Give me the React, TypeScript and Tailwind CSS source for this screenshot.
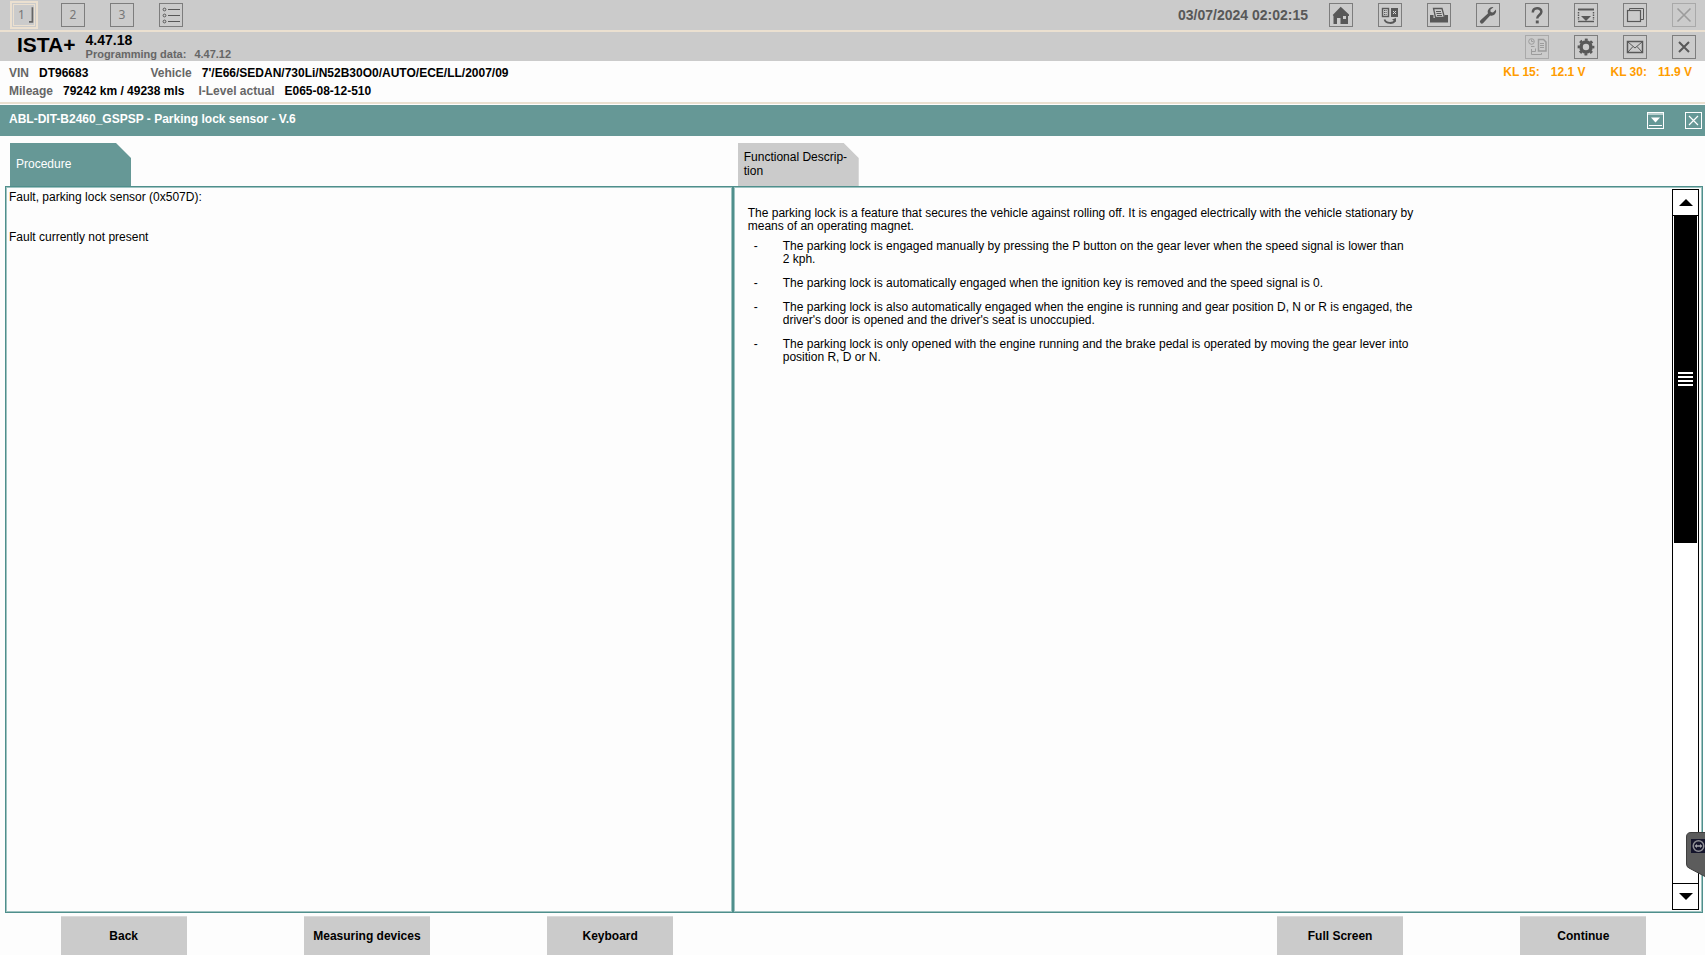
import type { ReactNode } from 'react';

type IconButtonProps = { label: string; children: ReactNode; faded?: boolean };

function IconButton({ label, children, faded = false }: IconButtonProps) {
  return (
    <button
      type="button"
      aria-label={label}
      className={
        faded
          ? 'size-6 shrink-0 border border-[#a9a9a9] bg-[#cbcbcb] text-[#9c9c9c]'
          : 'size-6 shrink-0 border border-[#7d7d7d] bg-[#cbcbcb] text-[#585858]'
      }
    >
      {children}
    </button>
  );
}

function Glyph({ children }: { children: ReactNode }) {
  return (
    <svg viewBox="1 1 22 22" className="block size-full" fill="none" stroke="currentColor" aria-hidden="true">
      {children}
    </svg>
  );
}

function HomeIcon() {
  return (
    <Glyph>
      <path
        fill="currentColor"
        stroke="none"
        fillRule="evenodd"
        d="M11.700 3.700 L20 11.500 V13 H19 V21 H11.500 V15 H8 V21 H4.500 V13 L3.700 12 Z M14 13 V16 H17 V13 Z"
      />
    </Glyph>
  );
}

function TransferIcon() {
  return (
    <Glyph>
      <rect x="4.500" y="5.500" width="6" height="8" strokeWidth="1.400" />
      <path d="M6 7.500h3M6 9.500h3M6 11.500h3" strokeWidth="1" strokeDasharray="1 .6" />
      <rect x="13" y="5" width="7" height="9" fill="currentColor" stroke="none" />
      <path d="M15 8l3 3M18 8l-3 3" stroke="#d8d8d8" />
      <path d="M6.500 16.500c1.500 4.500 9 4.500 10.500 .8" strokeWidth="1.800" />
      <path d="M14 16.500l4-1.500v4z" fill="currentColor" stroke="none" />
    </Glyph>
  );
}

function PrinterIcon() {
  return (
    <Glyph>
      <path d="M3 12h3.500v3h11v-3H21v7.500H3z" fill="currentColor" stroke="none" />
      <path d="M8.500 14.500L6.500 5.500H15l2.500 9z" strokeWidth="1.300" />
      <path d="M9 8.500h5M9.500 10.500h5M10 12.500h5" strokeWidth="1.200" />
    </Glyph>
  );
}

function WrenchIcon() {
  return (
    <Glyph>
      <path
        d="M17.500 4.200a4.800 4.800 0 0 0-5.600 6.300L4.500 17.300a1.900 1.900 0 0 0 2.700 2.700l7-7.500a4.800 4.800 0 0 0 5.800-6l-3 3-2.300-.5-.4-2.200z"
        fill="currentColor"
        stroke="none"
      />
    </Glyph>
  );
}

function HelpIcon() {
  return (
    <Glyph>
      <path d="M7.800 9.500c0-5.400 8.600-5.400 8.600-.8 0 3.200-4.200 3.300-4.200 6.800" strokeWidth="2.500" />
      <rect x="10.800" y="17.500" width="2.900" height="2.900" fill="currentColor" stroke="none" />
    </Glyph>
  );
}

function DropPanelIcon() {
  return (
    <Glyph>
      <path d="M4 6.500h16" strokeWidth="2" />
      <path d="M4.500 9v8M19.500 9v8" strokeWidth="1.400" strokeDasharray="1.500 1" />
      <path d="M7 13h10l-5 5z" fill="currentColor" stroke="none" />
      <path d="M4 18.500h16" strokeWidth="1.400" />
    </Glyph>
  );
}

function WindowsIcon() {
  return (
    <Glyph>
      <path d="M6.500 8V5.500h14v11H18" />
      <rect x="4.500" y="7.500" width="13" height="11" strokeWidth="1.200" />
    </Glyph>
  );
}

function BigCrossIcon() {
  return (
    <Glyph>
      <path d="M5.500 5.500l13 13M18.500 5.500l-13 13" strokeWidth="1.600" />
    </Glyph>
  );
}

function CrossIcon() {
  return (
    <Glyph>
      <path d="M7 7l10 10M17 7L7 17" strokeWidth="2" />
    </Glyph>
  );
}

function DocumentFlowIcon() {
  return (
    <Glyph>
      <circle cx="6.500" cy="6.500" r="2.800" />
      <path d="M6.500 4.500v2h2" />
      <path d="M13.500 4.500h5l2.500 2.500v9h-7.500z" strokeWidth="1.500" />
      <path d="M15 8.500h4M15 10.500h4M15 12.500h4" />
      <path d="M6 11.500h3.500M6.500 14v5.500h10V18M10.500 13.500v3h-4" />
    </Glyph>
  );
}

function GearIcon() {
  return (
    <Glyph>
      <circle cx="12" cy="12" r="5" strokeWidth="3.600" />
      <circle cx="12" cy="12" r="7.300" strokeWidth="2.200" strokeDasharray="2.870 2.870" strokeDashoffset="1.430" />
    </Glyph>
  );
}

function MailIcon() {
  return (
    <Glyph>
      <rect x="4.500" y="6.500" width="15" height="11" strokeWidth="1.500" />
      <path d="M5 7l7 6 7-6M5 17l5-5.500M19 17l-5-5.500" />
    </Glyph>
  );
}

function ListIcon() {
  return (
    <Glyph>
      <circle cx="5.500" cy="6.500" r="1.400" />
      <circle cx="5.500" cy="12.500" r="1.400" />
      <circle cx="5.500" cy="18.500" r="1.400" />
      <path d="M9 6.500h12M9 12.500h12M9 18.500h12" />
    </Glyph>
  );
}

function TopBar() {
  return (
    <header className="flex h-8 items-center justify-between border-b-2 border-[#ebe0d0] bg-[#cbcbcb] pr-[9px] pl-[10px]">
      <nav aria-label="Operations" className="flex items-center gap-[25px]">
        <button
          type="button"
          className="-mr-[2px] flex size-7 items-center justify-center border-2 border-[#ebe0d0] bg-[#cbcbcb] text-xs text-[#777777]"
        >
          <span className="flex size-[22px] items-center justify-center gap-1 border border-[#ebe0d0] pl-1 font-['Noto_Sans',sans-serif]">
            1
            <svg viewBox="0 0 6 20" className="h-5 w-[6px]" aria-hidden="true">
              <path d="M4 1v17H0" fill="none" stroke="#666666" strokeWidth="2" />
            </svg>
          </span>
        </button>
        <button type="button" className="size-6 border border-[#7d7d7d] font-['Noto_Sans',sans-serif] text-xs text-[#777777]">
          2
        </button>
        <button type="button" className="size-6 border border-[#7d7d7d] font-['Noto_Sans',sans-serif] text-xs text-[#777777]">
          3
        </button>
        <IconButton label="Operations list"><ListIcon /></IconButton>
      </nav>
      <div className="flex items-center gap-[25px]">
        <time className="-mr-1 text-sm font-bold text-[#585858]">03/07/2024 02:02:15</time>
        <IconButton label="Home"><HomeIcon /></IconButton>
        <IconButton label="Connection manager"><TransferIcon /></IconButton>
        <IconButton label="Print"><PrinterIcon /></IconButton>
        <IconButton label="Settings"><WrenchIcon /></IconButton>
        <IconButton label="Help"><HelpIcon /></IconButton>
        <IconButton label="Minimise"><DropPanelIcon /></IconButton>
        <IconButton label="Windows"><WindowsIcon /></IconButton>
        <IconButton label="Exit" faded><BigCrossIcon /></IconButton>
      </div>
    </header>
  );
}

function ProductBar() {
  return (
    <div className="flex h-[29px] items-center justify-between bg-[#cbcbcb] pr-[9px] pl-[17px]">
      <div className="flex items-center gap-[10px]">
        <h1 className="pb-1 text-[21px] leading-6 font-bold">ISTA+</h1>
        <div className="pb-px font-bold">
          <p className="text-sm leading-4">4.47.18</p>
          <p className="flex gap-2 text-[11px] leading-3 text-[#666666]">
            <span>Programming data:</span>
            <span>4.47.12</span>
          </p>
        </div>
      </div>
      <div className="flex items-center gap-[25px]">
        <IconButton label="Documents" faded><DocumentFlowIcon /></IconButton>
        <IconButton label="Configuration"><GearIcon /></IconButton>
        <IconButton label="Messages"><MailIcon /></IconButton>
        <IconButton label="Close"><CrossIcon /></IconButton>
      </div>
    </div>
  );
}

function Field({ label, value }: { label: string; value: string }) {
  return (
    <div className="flex gap-[10px]">
      <dt className="text-[#666666]">{label}</dt>
      <dd>{value}</dd>
    </div>
  );
}

function VehicleBar() {
  return (
    <div className="flex justify-between border-b-2 border-[#ebe0d0] pt-[3px] pr-[13px] pb-[2px] pl-[9px] text-xs leading-[18px] font-bold">
      <dl>
        <div className="flex gap-[62px]">
          <Field label="VIN" value="DT96683" />
          <Field label="Vehicle" value="7'/E66/SEDAN/730Li/N52B30O0/AUTO/ECE/LL/2007/09" />
        </div>
        <div className="flex gap-[14px]">
          <Field label="Mileage" value="79242 km / 49238 mls" />
          <Field label="I-Level actual" value="E065-08-12-510" />
        </div>
      </dl>
      <div className="flex gap-[25px] leading-4 text-[#ff9c00]">
        <p className="flex gap-[11px]"><span>KL 15:</span><span>12.1 V</span></p>
        <p className="flex gap-[11px]"><span>KL 30:</span><span>11.9 V</span></p>
      </div>
    </div>
  );
}

function TitleBar() {
  return (
    <div className="mt-px flex h-[31px] items-center justify-between bg-[#669896] pr-[3px] pl-[9px] text-white">
      <h2 className="pb-1 text-xs font-bold">ABL-DIT-B2460_GSPSP - Parking lock sensor - V.6</h2>
      <div className="flex gap-[21px]">
        <button type="button" aria-label="Collapse" className="size-[17px] border border-white">
          <svg viewBox="0 0 15 15" className="block size-full" aria-hidden="true">
            <path d="M0 0h15v2H0z" fill="#b9d0cf" />
            <path d="M3 4.500h9L7.500 9.500z" fill="#fff" />
            <path d="M1 12.500h13" stroke="#fff" />
          </svg>
        </button>
        <button type="button" aria-label="Close procedure" className="size-[17px] border border-white">
          <svg viewBox="0 0 15 15" className="block size-full" aria-hidden="true">
            <path d="M3 3l9 9M12 3l-9 9" stroke="#fff" strokeWidth="1.200" />
          </svg>
        </button>
      </div>
    </div>
  );
}

const introLines = [
  'The parking lock is a feature that secures the vehicle against rolling off. It is engaged electrically with the vehicle stationary by',
  'means of an operating magnet.',
];

const listItems = [
  ['The parking lock is engaged manually by pressing the P button on the gear lever when the speed signal is lower than', '2 kph.'],
  ['The parking lock is automatically engaged when the ignition key is removed and the speed signal is 0.'],
  ['The parking lock is also automatically engaged when the engine is running and gear position D, N or R is engaged, the', "driver's door is opened and the driver's seat is unoccupied."],
  ['The parking lock is only opened with the engine running and the brake pedal is operated by moving the gear lever into', 'position R, D or N.'],
];

function Lines({ lines }: { lines: string[] }) {
  return (
    <>
      {lines.map((line) => (
        <span key={line} className="block whitespace-nowrap">{line}</span>
      ))}
    </>
  );
}

function ScrollBar() {
  return (
    <div className="flex w-[27px] shrink-0 flex-col border border-black bg-white">
      <button type="button" aria-label="Scroll up" className="flex h-[26px] shrink-0 items-center justify-center border-b border-black">
        <svg viewBox="0 0 14 7" className="h-[7px] w-[14px]" aria-hidden="true"><path d="M7 0l7 7H0z" /></svg>
      </button>
      <div className="flex-1 px-px">
        <div className="flex h-[49%] flex-col items-center justify-center gap-[2px] bg-black">
          <span className="h-[2px] w-[15px] bg-white" />
          <span className="h-[2px] w-[15px] bg-white" />
          <span className="h-[2px] w-[15px] bg-white" />
          <span className="h-[2px] w-[15px] bg-white" />
        </div>
      </div>
      <button type="button" aria-label="Scroll down" className="flex h-[26px] shrink-0 items-center justify-center border-t border-black">
        <svg viewBox="0 0 14 7" className="h-[7px] w-[14px]" aria-hidden="true"><path d="M0 0h14L7 7z" /></svg>
      </button>
    </div>
  );
}

const tabShape =
  'ml-[5px] flex h-[43px] w-[121px] items-center self-start pb-px pl-[6px] text-left text-xs leading-[14px] [clip-path:polygon(0_0,106px_0,100%_15px,100%_100%,0_100%)]';

const panelFrame = 'flex-1 border border-[#4f8f8c] inset-ring inset-ring-[#9fc3c1]';

function Workspace() {
  return (
    <main className="flex flex-1 pt-[7px] pr-[2px] pl-[5px]">
      <section className="flex flex-[3] flex-col">
        <button type="button" className={`${tabShape} bg-[#669896] text-white`}>Procedure</button>
        <div className={`${panelFrame} px-[3px] pt-[3px] text-xs leading-[14px]`}>
          <p>Fault, parking lock sensor (0x507D):</p>
          <p className="mt-[26px]">Fault currently not present</p>
        </div>
      </section>
      <section className="flex flex-[4] flex-col">
        <button type="button" className={`${tabShape} bg-[#cbcbcb] text-black`}>
          <span>
            Functional Descrip-
            <br />
            tion
          </span>
        </button>
        <div className={`${panelFrame} flex justify-between py-[2px] pr-[3px] pl-[14px]`}>
          <article className="pt-[18px] text-xs leading-[13px]">
            <p><Lines lines={introLines} /></p>
            <ul className="mt-[7px] flex flex-col gap-[11px]">
              {listItems.map((lines) => (
                <li key={lines[0]} className="flex pl-[6px]">
                  <span className="w-[29px] shrink-0">-</span>
                  <span><Lines lines={lines} /></span>
                </li>
              ))}
            </ul>
          </article>
          <ScrollBar />
        </div>
      </section>
    </main>
  );
}

function ActionButton({ children }: { children: ReactNode }) {
  return (
    <button type="button" className="h-[39px] w-[126px] border-t border-[#dadada] bg-[#cbcbcb] text-xs font-bold">
      {children}
    </button>
  );
}

function ActionBar() {
  return (
    <footer className="grid grid-cols-7 justify-items-center pt-[3px] pl-[2px]">
      <ActionButton>Back</ActionButton>
      <ActionButton>Measuring devices</ActionButton>
      <ActionButton>Keyboard</ActionButton>
      <span />
      <span />
      <ActionButton>Full Screen</ActionButton>
      <ActionButton>Continue</ActionButton>
    </footer>
  );
}

function RemoteHandle() {
  return (
    <button type="button" aria-label="Remote session" className="absolute right-0 bottom-[78px] h-[45px] w-[19px]">
      <svg viewBox="0 0 19 45" className="block size-full" aria-hidden="true">
        <path d="M19 .5H5Q.5 .5 .5 5V32Q.5 35 3 36L19 44.500" fill="#5c5c5c" stroke="#3f3f3f" />
        <rect x="5" y="7" width="14" height="14" fill="#14142b" />
        <circle cx="12.500" cy="14" r="5.300" fill="#14142b" stroke="#8d8d93" strokeWidth="1.500" />
        <path d="M8.500 14l2.500-2v1.300h3V12l2.500 2-2.500 2v-1.300h-3V16z" fill="#a5a5aa" />
      </svg>
    </button>
  );
}

export default function App() {
  return (
    <div className="relative flex min-h-screen flex-col bg-[#fdfdfd] font-['Liberation_Sans',Arial,sans-serif] text-black">
      <TopBar />
      <ProductBar />
      <VehicleBar />
      <TitleBar />
      <Workspace />
      <ActionBar />
      <RemoteHandle />
    </div>
  );
}
